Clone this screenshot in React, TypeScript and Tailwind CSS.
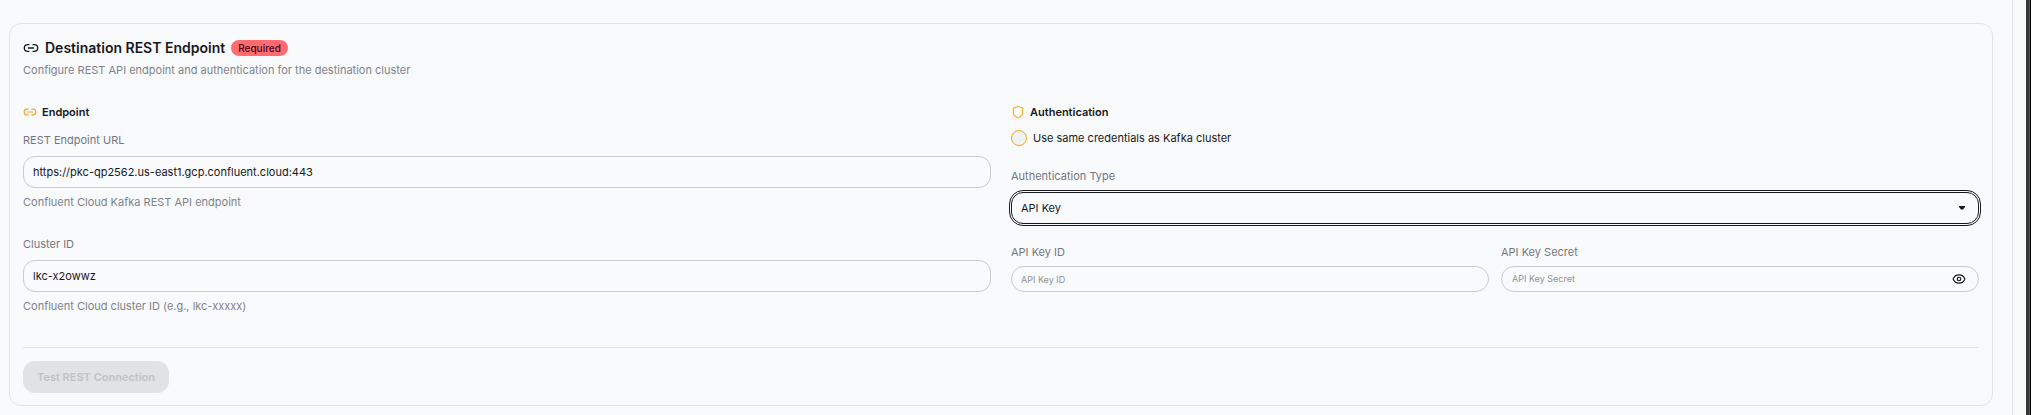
import { useState } from "react";
import type { ReactNode } from "react";
import { Eye, Shield } from "lucide-react";

function LinkIcon({ className }: { className: string }) {
  return (
    <svg viewBox="0 0 24 24" fill="none" stroke="currentColor" strokeWidth="2" strokeLinecap="round" strokeLinejoin="round" className={className} aria-hidden="true">
      <path d="M9 17H7A5 5 0 0 1 7 7h2" />
      <path d="M15 7h2a5 5 0 1 1 0 10h-2" />
      <path d="M8 12h8" />
    </svg>
  );
}

function SectionTitle({ icon, children }: { icon: ReactNode; children: ReactNode }) {
  return (
    <h3 className="flex items-center gap-[5px] text-[11px] leading-4 font-semibold">
      {icon}
      {children}
    </h3>
  );
}

function Label({ htmlFor, children }: { htmlFor: string; children: ReactNode }) {
  return (
    <label htmlFor={htmlFor} className="text-[11px] leading-4 text-[#74777d]">
      {children}
    </label>
  );
}

function Hint({ children }: { children: ReactNode }) {
  return <p className="mt-1.5 text-[11px] leading-4 text-[#808389]">{children}</p>;
}

const field = "mt-2 h-8 w-full rounded-xl border border-[#c9cbce] bg-transparent px-[9px] text-[11px] outline-none";

export default function App() {
  const [url, setUrl] = useState("https://pkc-qp2562.us-east1.gcp.confluent.cloud:443");
  const [cluster, setCluster] = useState("lkc-x2owwz");
  const [same, setSame] = useState(false);
  const [auth, setAuth] = useState("API Key");
  const [show, setShow] = useState(false);

  return (
    <div className="flex min-h-screen bg-[#f9fafc] font-['Inter',sans-serif] text-[#18181b]">
      <main className="min-w-0 flex-1 border-r border-[#e2e3e5] pt-[23px] pr-[19px] pb-2 pl-[9px]">
        <section className="rounded-xl border border-[#e2e3e5] px-[13px] py-3">
          <header className="flex flex-col gap-0.5">
            <h2 className="flex items-center gap-1.5 text-sm leading-6 font-semibold">
              <LinkIcon className="size-4" />
              Destination REST Endpoint
              <span className="rounded-full bg-[#ff6b6f] px-[7px] text-[10px] leading-4 font-medium text-[#4d0218]">Required</span>
            </h2>
            <p className="text-[11px] leading-4 text-[#808389]">Configure REST API endpoint and authentication for the destination cluster</p>
          </header>

          <div className="mt-[26px] grid grid-cols-2 gap-5">
            <div className="flex flex-col">
              <SectionTitle icon={<LinkIcon className="size-3.5 text-[#f5a524]" />}>Endpoint</SectionTitle>
              <div className="mt-3 flex flex-col">
                <Label htmlFor="url">REST Endpoint URL</Label>
                <input id="url" value={url} onChange={(e) => setUrl(e.target.value)} className={field} />
                <Hint>Confluent Cloud Kafka REST API endpoint</Hint>
              </div>
              <div className="mt-[26px] flex flex-col">
                <Label htmlFor="cluster">Cluster ID</Label>
                <input id="cluster" value={cluster} onChange={(e) => setCluster(e.target.value)} className={field} />
                <Hint>Confluent Cloud cluster ID (e.g., lkc-xxxxx)</Hint>
              </div>
            </div>

            <div className="flex flex-col">
              <SectionTitle icon={<Shield className="size-3.5 text-[#fbb424]" aria-hidden="true" />}>Authentication</SectionTitle>
              <label className="mt-2.5 flex items-center gap-1.5 text-[11px] leading-4">
                <input
                  type="checkbox"
                  checked={same}
                  onChange={(e) => setSame(e.target.checked)}
                  className="size-4 appearance-none rounded-full border border-[#f5a524] bg-[#f1f2f4] checked:bg-[#f5a524]"
                />
                Use same credentials as Kafka cluster
              </label>
              <div className="mt-[22px] flex flex-col gap-2">
                <Label htmlFor="auth">Authentication Type</Label>
                <div className="grid items-center">
                  <select
                    id="auth"
                    value={auth}
                    onChange={(e) => setAuth(e.target.value)}
                    className="col-start-1 row-start-1 h-8 w-full appearance-none rounded-xl border border-[#18181b] bg-transparent px-[9px] text-[11px] outline outline-offset-1 outline-[#18181b]"
                  >
                    <option>API Key</option>
                  </select>
                  <svg viewBox="0 0 6 4" className="pointer-events-none col-start-1 row-start-1 mr-3.5 h-1 w-1.5 justify-self-end" aria-hidden="true">
                    <path d="M0 0h6v1L4 3.5H2L0 1z" fill="currentColor" />
                  </svg>
                </div>
              </div>
              <div className="mt-5 grid grid-cols-2 gap-3">
                <div className="flex flex-col gap-1.5">
                  <Label htmlFor="key">API Key ID</Label>
                  <input id="key" placeholder="API Key ID" className="h-[26px] w-full rounded-full border border-[#c9cbce] bg-transparent px-[9px] text-[9px] outline-none placeholder:text-[#8f9297]" />
                </div>
                <div className="flex flex-col gap-1.5">
                  <Label htmlFor="secret">API Key Secret</Label>
                  <div className="flex h-[26px] items-center rounded-full border border-[#c9cbce] pr-3 pl-2.5">
                    <input id="secret" type={show ? "text" : "password"} placeholder="API Key Secret" className="min-w-0 flex-1 bg-transparent text-[9px] outline-none placeholder:text-[#8f9297]" />
                    <button type="button" aria-label="Show secret" onClick={() => setShow(!show)}>
                      <Eye className="size-3.5" aria-hidden="true" />
                    </button>
                  </div>
                </div>
              </div>
            </div>
          </div>

          <footer className="mt-[33px] border-t border-[#e2e3e5] pt-[13px]">
            <button type="button" disabled className="block h-8 rounded-xl bg-[#e1e2e4] px-3.5 text-[11px] font-semibold text-[#c0c2c5]">
              Test REST Connection
            </button>
          </footer>
        </section>
      </main>
      <div className="w-[13px]" />
      <div className="w-1 border-r border-[#555] bg-[#363836]" />
      <div className="w-px bg-black" />
    </div>
  );
}
